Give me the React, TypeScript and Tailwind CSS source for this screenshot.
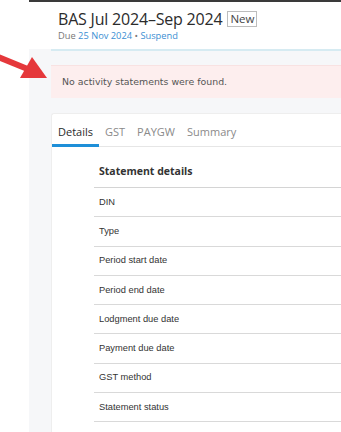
import React from "react";

const rows = [
  "DIN",
  "Type",
  "Period start date",
  "Period end date",
  "Lodgment due date",
  "Payment due date",
  "GST method",
  "Statement status",
];

export default function App() {
  return (
    <div className="relative flex w-[341px] h-[432px] overflow-hidden bg-white">
      <div className="w-[29px] shrink-0 bg-white" />
      <div className="flex-1 flex flex-col bg-[#f6f7f9]">
        <div className="h-[2px] bg-[#3a3a3a]" />
        <div className="h-[47px] bg-white pl-[29px] pt-[6px]" style={{ fontFamily: '"Open Sans", sans-serif' }}>
          <div className="flex items-center gap-[5px]">
            <span className="text-[16px] leading-[22px] text-[#2b2b2b] tracking-[-0.2px]">BAS Jul 2024–Sep 2024</span>
            <span className="border border-[#bdbdbd] px-[2px] text-[11.5px] leading-[14px] text-[#444]">New</span>
          </div>
          <div className="text-[9.3px] leading-[12px] text-[#777]">
            Due <span className="text-[#3b8fd3]">25 Nov 2024</span> • <span className="text-[#3b8fd3]">Suspend</span>
          </div>
        </div>
        <div className="pl-[22px]">
          <div className="h-[2px] bg-[#d6ebf2]" />
        </div>
        <div className="pl-[22px] pt-[14px]">
          <div
            className="h-[33px] bg-[#fdeeee] border-t border-[#f8e2e2] flex items-center pl-[11px] text-[9.4px] text-[#555]"
            style={{ fontFamily: '"DejaVu Sans", Verdana, sans-serif' }}
          >
            No activity statements were found.
          </div>
        </div>
        <div className="pl-[22px] pt-[15px] flex-1 flex">
          <div className="flex-1 bg-white rounded-tl-[3px] border-l border-t border-[#eeeeee] flex flex-col">
            <div
              className="h-[33px] border-b border-[#e6e6e6] flex items-end text-[11px]"
              style={{ fontFamily: '"Open Sans", sans-serif' }}
            >
              <div className="h-full flex flex-col justify-end">
                <div className="px-[6px] pb-[4px] text-[#2b2b2b] leading-[16px]">Details</div>
                <div className="h-[3px] bg-[#1e8fd8] -mb-[1px]" />
              </div>
              <div className="px-[6px] pb-[6px] leading-[16px] text-[#8a8a8a]">GST</div>
              <div className="px-[6px] pb-[6px] leading-[16px] text-[#8a8a8a]">PAYGW</div>
              <div className="px-[6px] pb-[6px] leading-[16px] text-[#8a8a8a]">Summary</div>
            </div>
            <div className="pl-[42px]">
              <div
                className="h-[41px] border-b border-[#d4d4d4] flex items-center pl-[5px] pt-[10px] text-[10.5px] font-bold text-[#333]"
                style={{ fontFamily: '"Open Sans", sans-serif' }}
              >
                Statement details
              </div>
              {rows.map((r) => (
                <div
                  key={r}
                  className="h-[29.3px] border-b border-[#d9d9d9] flex items-center pl-[5px] pt-[1px] text-[9.3px] text-[#333]"
                  style={{ fontFamily: '"Liberation Sans", Arial, sans-serif' }}
                >
                  {r}
                </div>
              ))}
            </div>
          </div>
        </div>
      </div>
      <svg className="absolute left-0 top-0" width="50" height="85" viewBox="0 0 50 85">
        <line x1="-2" y1="57" x2="30" y2="70" stroke="#e5383b" strokeWidth="6" />
        <polygon points="32,57 20,78 47,78" fill="#e5383b" />
      </svg>
    </div>
  );
}
